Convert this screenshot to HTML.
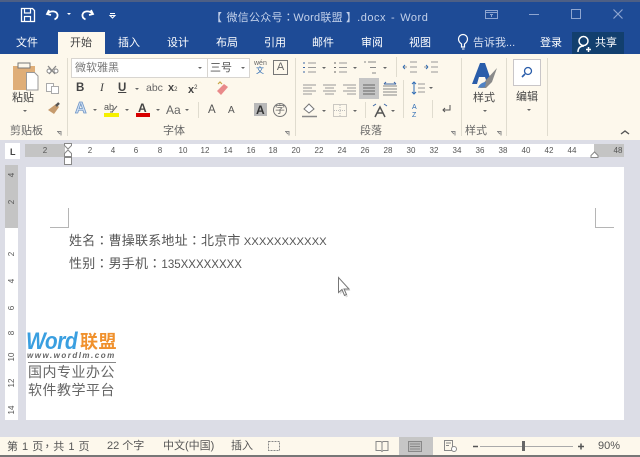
<!DOCTYPE html>
<html><head><meta charset="utf-8">
<style>
*{box-sizing:border-box}
html,body{margin:0;padding:0}
body{width:640px;height:457px;position:relative;overflow:hidden;background:#dcdde6;font-family:"Liberation Sans","Noto Sans CJK SC",sans-serif;color:#444}
.a{position:absolute;white-space:nowrap}
.c{font-family:"Noto Sans CJK TC",sans-serif}
.t{position:absolute;white-space:nowrap;font-size:11px;line-height:14px;color:#fff;top:36px}
.s{position:absolute;white-space:nowrap;font-size:11px;line-height:14px;color:#555}
.g{position:absolute;white-space:nowrap;font-size:11px;line-height:14px;color:#666;top:124px}
.sep{position:absolute;width:1px;background:#e0dccf;top:58px;height:78px}
.r{position:absolute;font-size:8px;line-height:10px;color:#555;top:146px;width:16px;text-align:center}
.v{position:absolute;font-size:8px;line-height:10px;color:#555;left:4px;width:16px;text-align:center;transform:rotate(-90deg)}
.arr{position:absolute;width:0;height:0;border-left:2px solid transparent;border-right:2px solid transparent;border-top:2px solid #666}
svg{position:absolute;overflow:visible}
</style></head><body>
<div class="a" style="left:0;top:0;width:640px;height:54px;background:#1e4b96"></div>
<div class="a" style="left:0;top:0;width:640px;height:2px;background:#4d5f85"></div>

<svg style="left:0;top:0" width="640" height="54" fill="none" stroke="#fff">
<path d="M21.500 8.500h11l2 2v11h-13z" stroke-width="1.300"/>
<path d="M24.500 9v4h6V9M24.500 21v-4.500h6V21" stroke-width="1.200"/>
<path d="M49 10l-2 4 4 1M47.500 13.500c3-3 9-3 10 1 .5 2.500-1 4-3 5" stroke-width="1.800"/>
<path d="M67 13l2 2 2-2z" fill="#fff" stroke="none"/>
<path d="M91 10l2 4-4 1M92.500 13.500c-3-3-9-3-10 1-.5 2.500 1 4 3 5" stroke-width="1.800"/>
<path d="M110 13.500h5M110 15.500l2.500 2.500 2.500-2.500z" stroke-width="1"/>
<rect x="485.500" y="10.500" width="12" height="8" stroke="#8ea5d0"/>
<path d="M485.500 12.500h12M491.500 14v3M490 14.500h3" stroke="#8ea5d0"/>
<path d="M529 14.500h10" stroke="#8ea5d0"/>
<rect x="571.500" y="9.500" width="9" height="9" stroke="#8ea5d0"/>
<path d="M613.500 9.500l9 9M622.500 9.500l-9 9" stroke="#8ea5d0" stroke-width="1.200"/>
</svg>
<div class="a" style="left:211px;top:10px;font-size:11px;line-height:14px;color:#c3d1ea;letter-spacing:.25px;word-spacing:1px">【 微信公众号<span class="c" style="letter-spacing:-.5px">：</span>Word联盟<span style="margin-left:3px">】</span><span style="letter-spacing:.5px;word-spacing:1.500px">.docx - Word</span></div>

<div class="a" style="left:58px;top:32px;width:47px;height:23px;background:#fdf8ec"></div>
<div class="a" style="left:572px;top:32px;width:52px;height:22px;background:#123f6e"></div>
<div class="t" style="left:16px">文件</div>
<div class="t" style="left:70px;color:#444">开始</div>
<div class="t" style="left:118px">插入</div>
<div class="t" style="left:167px">设计</div>
<div class="t" style="left:216px">布局</div>
<div class="t" style="left:264px">引用</div>
<div class="t" style="left:312px">邮件</div>
<div class="t" style="left:361px">审阅</div>
<div class="t" style="left:409px">视图</div>
<div class="t" style="left:473px;color:#d4ddef">告诉我...</div>
<div class="t" style="left:540px">登录</div>
<div class="t" style="left:595px">共享</div>
<svg style="left:0;top:0" width="640" height="54" fill="none" stroke="#fff">
<path d="M461.500 47v-3c-2-1.500-3-3-3-5a4.500 4.500 0 0 1 9 0c0 2-1 3.500-3 5v3z" stroke-width="1.200"/>
<path d="M462 49h2.500" stroke-width="1"/>
<circle cx="583.500" cy="41" r="4.500" stroke-width="1.500"/>
<path d="M578 52c0-4 2-6 6-6M586 49.500h5M588.500 47v5" stroke-width="1.500"/>
</svg>

<div class="a" style="left:0;top:54px;width:640px;height:86px;background:#fdf8ec"></div>
<div class="sep" style="left:67px"></div>
<div class="sep" style="left:295px"></div>
<div class="sep" style="left:461px"></div>
<div class="sep" style="left:506px"></div>
<div class="sep" style="left:547px"></div>
<div class="sep" style="left:396px;top:57px;height:20px"></div>
<div class="sep" style="left:365px;top:102px;height:16px"></div>
<div class="sep" style="left:403px;top:80px;height:38px"></div>
<div class="sep" style="left:432px;top:100px;height:18px"></div>

<svg style="left:0;top:0" width="640" height="140" fill="none">
<rect x="13" y="66" width="22" height="24" fill="#dfae78"/>
<rect x="18" y="63" width="12" height="5" fill="#fdf8ec" stroke="#777"/>
<path d="M26.500 72.500h8l3.500 3.500v14h-11.500z" fill="#fff" stroke="#999"/>
<path d="M48 66l7 8M56 66l-7 8" stroke="#888" stroke-width="1.300"/>
<circle cx="49" cy="71" r="2" stroke="#888" fill="#fff"/><circle cx="56" cy="71" r="2" stroke="#888" fill="#fff"/>
<rect x="46.500" y="83.500" width="7" height="8" stroke="#aaa" fill="#fff"/>
<rect x="51.500" y="86.500" width="7" height="7" stroke="#aaa" fill="#fff"/>
<path d="M48 110l8-6 3 3-5 7z" fill="#c69b6d"/><path d="M56 106l3-3" stroke="#555" stroke-width="2.500"/>

<rect x="104" y="113" width="15" height="4" fill="#f5f000"/>
<rect x="136" y="113" width="14" height="4" fill="#d80000"/>
<path d="M112 112l5-6M110 112h3" stroke="#666"/>

<path d="M217 91l7-7 4 3-7 8z" fill="#e98a8a"/><path d="M218 84l2-2 2 2" stroke="#c7a544" stroke-width="1.200"/>
<rect x="254" y="103" width="13" height="13" fill="#b9b9b9"/>
<circle cx="280" cy="110" r="6.500" stroke="#777"/>

<path d="M303 63h2M303 67.500h2M303 72h2" stroke="#3c66a5"/><path d="M308 63h8M308 67.500h8M308 72h8" stroke="#999"/>
<path d="M334 63h2M334 67.500h2M334 72h2" stroke="#666"/><path d="M339 63h8M339 67.500h8M339 72h8" stroke="#999"/>
<path d="M364 62h2M368 62h8M370 67.500h6M372 73h4" stroke="#888"/>
<path d="M303 85h13M303 88h9M303 91h13M303 94h9" stroke="#999"/>
<path d="M323 85h13M325 88h9M323 91h13M325 94h9" stroke="#999"/>
<path d="M343 85h13M347 88h9M343 91h13M347 94h9" stroke="#999"/>
<rect x="359" y="78" width="20" height="21" fill="#c6c6c6"/>
<path d="M363 85h12M363 88h12M363 91h12M363 94h12" stroke="#666"/>
<path d="M383 86h14M383 89h14M383 92h14M383 95h14" stroke="#888"/><path d="M384 84h12M384 84l2-2M396 84l-2-2" stroke="#3c66a5"/>
<path d="M302 116.500h15" stroke="#888" stroke-width="1.500"/>
<path d="M304 109l5-5 5 5-5 4z" fill="#fff" stroke="#777"/>
<rect x="333.500" y="104.500" width="13" height="12" stroke="#999" stroke-dasharray="1 1"/>
<path d="M340 105v11M334 110.500h12" stroke="#bbb" stroke-dasharray="1 1"/>
<path d="M375 117l5-10 5 10M376.500 113h7" stroke="#555" stroke-width="1.500"/>
<path d="M373 106l3-2M387 106l-3-2" stroke="#3c66a5"/>

<path d="M403 67h4M410 62h7M410 67h7M410 72h7" stroke="#999"/><path d="M403 67l2-2M403 67l2 2" stroke="#2f6db5"/>
<path d="M424 67h4M431 62h7M431 67h7M431 72h7" stroke="#999"/><path d="M428 67l-2-2M428 67l-2 2" stroke="#2f6db5"/>
<path d="M414 82v12M412 84l2-2 2 2M412 92l2 2 2-2" stroke="#2f6db5"/><path d="M418 84h7M418 88h7M418 92h7" stroke="#999"/>
<path d="M450 105v5h-7M445 108l-2 2 2 2" stroke="#555"/>

<path d="M472 84l8-21h5l6 17h-5l-1-3h-6l-2 7z" fill="#2a5daa"/>
<path d="M480 88l6-8 11-12-5 14-6 6z" fill="#8a8a8a"/>
<path d="M478 88c1-4 5-6 8-6l-1 5z" fill="#4f82c4"/>
<rect x="513.500" y="59.500" width="27" height="26" fill="#fff" stroke="#c9c6c8"/>
<circle cx="528" cy="71" r="3.500" stroke="#2a5daa" stroke-width="1.300"/>
<path d="M525 74l-3 3" stroke="#2a5daa" stroke-width="1.600"/>
<path d="M621 134l4-3 4 3" stroke="#555" stroke-width="1.400"/>
<g stroke="#888" fill="none">
<path d="M57 131.500h4v4M60 134l-2-2"/><path d="M285 131.500h4v4M288 134l-2-2"/><path d="M451 131.500h4v4M454 134l-2-2"/><path d="M497 131.500h4v4M500 134l-2-2"/>
</g>
</svg>

<div class="s" style="left:12px;top:91px;color:#444">粘贴</div>
<div class="arr" style="left:23px;top:110px"></div>
<div class="g" style="left:10px">剪贴板</div>
<div class="g" style="left:163px">字体</div>
<div class="g" style="left:360px">段落</div>
<div class="g" style="left:465px">样式</div>
<div class="s" style="left:473px;top:91px;color:#444">样式</div>
<div class="arr" style="left:483px;top:110px"></div>
<div class="s" style="left:516px;top:90px;color:#444">编辑</div>
<div class="arr" style="left:527px;top:109px"></div>

<div class="a" style="left:71px;top:58px;width:137px;height:20px;background:#fff;border:1px solid #d8d5d0"></div>
<div class="a" style="left:207px;top:58px;width:43px;height:20px;background:#fff;border:1px solid #d8d5d0"></div>
<div class="s" style="left:75px;top:61px;color:#777">微软雅黑</div>
<div class="s" style="left:210px;top:61px;color:#555">三号</div>
<div class="arr" style="left:198px;top:67px"></div>
<div class="arr" style="left:241px;top:67px"></div>
<div class="a" style="left:254px;top:59px;font-size:7px;line-height:9px;color:#666">wén</div>
<div class="a" style="left:256px;top:66px;font-size:8px;line-height:10px;color:#2f6db5">文</div>
<div class="a" style="left:273px;top:60px;width:15px;height:15px;border:1px solid #777;font-size:11px;line-height:13px;text-align:center;color:#666">A</div>

<div class="s" style="left:76px;top:81px;font-weight:bold;font-size:11.500px;color:#444">B</div>
<div class="s" style="left:100px;top:81px;font-size:11.500px;font-family:'Liberation Serif',serif;font-style:italic;color:#444">I</div>
<div class="s" style="left:118px;top:81px;font-weight:bold;font-size:11.500px;text-decoration:underline;color:#444">U</div>
<div class="arr" style="left:135px;top:88px"></div>
<div class="s" style="left:146px;top:81px;font-size:10.500px;color:#666">abc</div>
<div class="s" style="left:168px;top:81px;font-size:11px;font-weight:bold;color:#444">x<span style="font-size:6px;font-weight:normal">2</span></div>
<div class="s" style="left:188px;top:81px;font-size:11px;font-weight:bold;color:#444">x<span style="font-size:6px;font-weight:normal;vertical-align:4px">2</span></div>

<div class="a" style="left:75px;top:100px;font-size:16px;line-height:18px;font-weight:bold;color:#cfe0f3;-webkit-text-stroke:.8px #6f95c6">A</div>
<div class="arr" style="left:93px;top:109px"></div>
<div class="s" style="left:104px;top:100px;font-size:9px;color:#555">ab</div>
<div class="arr" style="left:125px;top:109px"></div>
<div class="s" style="left:138px;top:101px;font-size:12px;font-weight:bold;color:#444">A</div>
<div class="arr" style="left:156px;top:109px"></div>
<div class="s" style="left:166px;top:103px;font-size:12px;color:#666">Aa</div>
<div class="arr" style="left:185px;top:109px"></div>
<div class="sep" style="left:198px;top:102px;height:16px"></div>
<div class="s" style="left:208px;top:103px;font-size:11.500px;color:#555">A</div>
<div class="s" style="left:228px;top:104px;font-size:10px;color:#555">A</div>
<div class="s" style="left:256px;top:103px;font-size:12px;font-weight:bold;color:#333">A</div>
<div class="s" style="left:275px;top:104px;font-size:10px;color:#666">字</div>
<div class="arr" style="left:322px;top:110px"></div>
<div class="arr" style="left:353px;top:110px"></div>
<div class="arr" style="left:391px;top:110px"></div>
<div class="arr" style="left:322px;top:67px"></div>
<div class="arr" style="left:353px;top:67px"></div>
<div class="arr" style="left:383px;top:67px"></div>
<div class="arr" style="left:429px;top:87px"></div>
<div class="s" style="left:412px;top:104px;font-size:7px;line-height:8px;color:#2f6db5;width:8px">A<br>Z</div>

<!-- ruler area -->
<div class="a" style="left:5px;top:143px;width:15px;height:16px;background:#fff"></div>
<div class="a" style="left:10px;top:147px;font-size:9px;line-height:11px;font-weight:bold;color:#444">L</div>
<div class="a" style="left:25px;top:144px;width:599px;height:13px;background:#fff"></div>
<div class="a" style="left:25px;top:144px;width:40px;height:13px;background:#c4c4c4"></div>
<div class="a" style="left:594px;top:144px;width:30px;height:13px;background:#c4c4c4"></div>
<div class="r" style="left:37px">2</div>
<div class="r" style="left:82px">2</div><div class="r" style="left:105px">4</div><div class="r" style="left:128px">6</div><div class="r" style="left:152px">8</div><div class="r" style="left:175px">10</div><div class="r" style="left:197px">12</div><div class="r" style="left:220px">14</div><div class="r" style="left:243px">16</div><div class="r" style="left:265px">18</div><div class="r" style="left:288px">20</div><div class="r" style="left:311px">22</div><div class="r" style="left:334px">24</div><div class="r" style="left:357px">26</div><div class="r" style="left:380px">28</div><div class="r" style="left:403px">30</div><div class="r" style="left:426px">32</div><div class="r" style="left:449px">34</div><div class="r" style="left:472px">36</div><div class="r" style="left:495px">38</div><div class="r" style="left:518px">40</div><div class="r" style="left:541px">42</div><div class="r" style="left:564px">44</div><div class="r" style="left:610px">48</div>
<svg style="left:0;top:0" width="640" height="170" fill="none">
<path d="M64.500 143.500h7v2l-3.500 3.500-3.500-3.500z" fill="#fff" stroke="#888"/>
<path d="M68 150l3.500 3.500v3h-7v-3z" fill="#fff" stroke="#888"/>
<rect x="64.500" y="157.500" width="7" height="7" fill="#fff" stroke="#888"/>
<path d="M591 157.500v-2l3.500-3.500 3.500 3.500v2z" fill="#fff" stroke="#888"/>
</svg>

<div class="a" style="left:5px;top:165px;width:13px;height:255px;background:#fff"></div>
<div class="a" style="left:5px;top:165px;width:13px;height:63px;background:#c4c4c4"></div>
<div class="v" style="top:170px">4</div>
<div class="v" style="top:197px">2</div>
<div class="v" style="top:249px">2</div>
<div class="v" style="top:276px">4</div>
<div class="v" style="top:303px">6</div>
<div class="v" style="top:328px">8</div>
<div class="v" style="top:352px">10</div>
<div class="v" style="top:378px">12</div>
<div class="v" style="top:405px">14</div>

<!-- page -->
<div class="a" style="left:26px;top:167px;width:598px;height:253px;background:#fff"></div>
<svg style="left:0;top:0" width="640" height="457" fill="none" stroke="#b5b5b5">
<path d="M68.500 208v19.500H50"/>
<path d="M595.500 208v19.500H614"/>
<path d="M340 279.500v15l3.500-3 2.500 6 2-1-2.500-5.500h5z" fill="#ddd" stroke="none"/>
<path d="M338.500 277.500v15l3.500-3 2.500 6 2-1-2.500-5.500h5z" fill="#fff" stroke="#777"/>
<path d="M28 362.500h88" stroke="#888"/>
</svg>
<div class="a" style="left:69px;top:232px;font-size:13px;line-height:16px;color:#555;letter-spacing:.2px">姓名<span class="c">：</span>曹操联系地址<span class="c">：</span>北京市<span style="font-size:11.300px;letter-spacing:0"> XXXXXXXXXXX</span></div>
<div class="a" style="left:69px;top:255px;font-size:13px;line-height:16px;color:#555;letter-spacing:.2px">性别<span class="c">：</span>男手机<span class="c">：</span><span style="font-size:11.500px;letter-spacing:0">135XXXXXXXX</span></div>

<div class="a" style="left:26px;top:328px;font-size:24px;line-height:28px;font-weight:bold;font-style:italic;color:#3a9fe0;letter-spacing:-.5px;transform:scaleX(.87);transform-origin:left top">Word</div>
<div class="a" style="left:80px;top:331px;font-size:18px;line-height:22px;font-weight:bold;color:#f0912d;letter-spacing:.5px">联盟</div>
<div class="a" style="left:27px;top:351px;font-size:8px;line-height:10px;font-weight:bold;font-style:italic;color:#666;letter-spacing:1.500px">www.wordlm.com</div>
<div class="a" style="left:28px;top:363px;font-size:14px;line-height:18px;color:#666;letter-spacing:.5px">国内专业办公</div>
<div class="a" style="left:28px;top:381px;font-size:14px;line-height:18px;color:#666;letter-spacing:.5px">软件教学平台</div>

<!-- status bar -->
<div class="a" style="left:0;top:437px;width:640px;height:18px;background:#fdf8ec"></div>
<div class="a" style="left:0;top:455px;width:640px;height:2px;background:#777"></div>
<div class="a" style="left:399px;top:437px;width:34px;height:18px;background:#c6c6c6"></div>
<div class="s" style="left:7px;top:439px;letter-spacing:.5px">第 1 页<span class="c" style="letter-spacing:-3px;margin-left:-2px">，</span> 共 1 页</div>
<div class="s" style="left:107px;top:439px">22 个字</div>
<div class="s" style="left:163px;top:439px">中文(中国)</div>
<div class="s" style="left:231px;top:439px">插入</div>
<div class="s" style="left:598px;top:439px">90%</div>
<svg style="left:0;top:0" width="640" height="457" fill="none" stroke="#888">
<rect x="268.500" y="441.500" width="11" height="9" stroke-dasharray="2 1"/>
<path d="M376 441.500h5l1 1 1-1h5v9h-5l-1 1-1-1h-5zM382 443v7" />
<rect x="408.500" y="441.500" width="13" height="10" fill="#bbb"/>
<path d="M410 444h10M410 446.500h10M410 449h10"/>
<path d="M444.500 440.500h8v10h-8zM446 443h5M446 445.500h3"/>
<circle cx="454" cy="449" r="2.500" fill="#fff"/>
<path d="M473 446.500h5" stroke="#555" stroke-width="1.500"/>
<path d="M480 446.500h93" stroke="#aaa"/>
<rect x="522" y="441" width="3" height="10" fill="#666" stroke="none"/>
<path d="M578 446.500h6M581 443.500v6" stroke="#555" stroke-width="1.500"/>
</svg>
</body></html>
